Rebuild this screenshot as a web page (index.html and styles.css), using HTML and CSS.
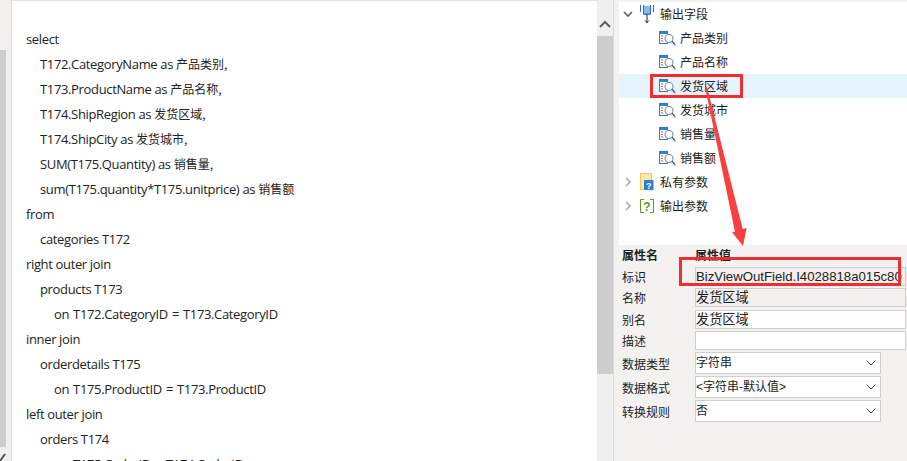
FILE: index.html
```html
<!DOCTYPE html>
<html lang="zh">
<head>
<meta charset="utf-8">
<title>SQL</title>
<link rel="stylesheet" href="styles.css">
</head>
<body>
<svg width="0" height="0" class="defs">
  <symbol id="field" viewBox="0 0 17 15">
    <rect x="0.5" y="0.5" width="8" height="12" fill="#fff" stroke="#1f7fc4"/>
    <rect x="0.5" y="0.5" width="8" height="2.5" fill="#1f8ad0"/>
    <path d="M2 5h2M2 7.5h2M2 10h2" stroke="#c0503c"/>
    <circle cx="10" cy="7.5" r="4" fill="#fff" stroke="#7c8ea6" stroke-width="1.1"/>
    <path d="M12.800 10.300l3.400 3.400" stroke="#4e6580" stroke-width="1.600"/>
  </symbol>
</svg>
<div class="app">
  <div class="edge"><div class="edge-thumb"></div></div>
  <main class="editor">
    <div class="code">
      <div>select</div>
      <div class="i1">T172.CategoryName as <span class="cjk">产品类别,</span></div>
      <div class="i1">T173.ProductName as <span class="cjk">产品名称,</span></div>
      <div class="i1">T174.ShipRegion as <span class="cjk">发货区域,</span></div>
      <div class="i1">T174.ShipCity as <span class="cjk">发货城市,</span></div>
      <div class="i1">SUM(T175.Quantity) as <span class="cjk">销售量,</span></div>
      <div class="i1">sum(T175.quantity*T175.unitprice) as <span class="cjk">销售额</span></div>
      <div>from</div>
      <div class="i1">categories T172</div>
      <div>right outer join</div>
      <div class="i1">products T173</div>
      <div class="i2">on T172.CategoryID = T173.CategoryID</div>
      <div>inner join</div>
      <div class="i1">orderdetails T175</div>
      <div class="i2">on T175.ProductID = T173.ProductID</div>
      <div>left outer join</div>
      <div class="i1">orders T174</div>
      <div class="i2">on T175.OrderID = T174.OrderID</div>
    </div>
  </main>
  <div class="vscroll">
    <svg class="up" width="12" height="8" viewBox="0 0 12 8"><path d="M1 7l5-5 5 5" fill="none" stroke="#606060" stroke-width="2"/></svg>
    <div class="vthumb"></div>
  </div>
  <aside class="side">
    <div class="tree">
      <div class="row root">
        <svg class="tw" width="10" height="10" viewBox="0 0 10 10"><path d="M1 3l4 4 4-4" fill="none" stroke="#606060" stroke-width="1.6"/></svg>
        <svg class="ico" width="14" height="18" viewBox="0 0 14 18"><rect x="3" y="1" width="8" height="9" fill="#8db8ee"/><path d="M.5 0v7M3.500 0v9h7V0M13.500 0v7" fill="none" stroke="#2a6fc4"/><path d="M7 9v9M5 15.500l2 2 2-2" fill="none" stroke="#222"/></svg>
        <span>输出字段</span>
      </div>
      <div class="row leaf"><svg class="f"><use href="#field"/></svg><span>产品类别</span></div>
      <div class="row leaf"><svg class="f"><use href="#field"/></svg><span>产品名称</span></div>
      <div class="row leaf sel"><svg class="f"><use href="#field"/></svg><span>发货区域</span></div>
      <div class="row leaf"><svg class="f"><use href="#field"/></svg><span>发货城市</span></div>
      <div class="row leaf"><svg class="f"><use href="#field"/></svg><span>销售量</span></div>
      <div class="row leaf"><svg class="f"><use href="#field"/></svg><span>销售额</span></div>
      <div class="row root">
        <svg class="tw" width="10" height="10" viewBox="0 0 10 10"><path d="M3 1l4 4-4 4" fill="none" stroke="#a8a8a8" stroke-width="1.6"/></svg>
        <svg class="ico" width="14" height="18" viewBox="0 0 14 18"><rect x=".5" y=".5" width="11" height="16" fill="#fbe7a8" stroke="#e8c868"/><rect x="4" y="7" width="9.500" height="10" fill="#2f7fd6"/><text x="8.700" y="15.500" class="q">?</text></svg>
        <span>私有参数</span>
      </div>
      <div class="row root">
        <svg class="tw" width="10" height="10" viewBox="0 0 10 10"><path d="M3 1l4 4-4 4" fill="none" stroke="#a8a8a8" stroke-width="1.6"/></svg>
        <svg class="ico" width="14" height="15" viewBox="0 0 14 15"><path d="M4 .5H.5v13H4M10 .5h3.500v13H10" fill="none" stroke="#5a9a1e"/><text x="7" y="12" class="q2">?</text></svg>
        <span>输出参数</span>
      </div>
    </div>
    <div class="props">
      <div class="phead"><span>属性名</span><span>属性值</span></div>
      <div class="prop"><label>标识</label><div class="val ro">BizViewOutField.I4028818a015c80</div></div>
      <div class="prop"><label>名称</label><div class="val ro">发货区域</div></div>
      <div class="prop"><label>别名</label><div class="val">发货区域</div></div>
      <div class="prop"><label>描述</label><div class="val"></div></div>
      <div class="prop sel-row"><label>数据类型</label><div class="val combo">字符串<svg width="10" height="6" viewBox="0 0 10 6"><path d="M.5.500l4.500 4.500 4.500-4.500" fill="none" stroke="#444"/></svg></div></div>
      <div class="prop sel-row"><label>数据格式</label><div class="val combo">&lt;字符串-默认值&gt;<svg width="10" height="6" viewBox="0 0 10 6"><path d="M.5.500l4.500 4.500 4.500-4.500" fill="none" stroke="#444"/></svg></div></div>
      <div class="prop sel-row"><label>转换规则</label><div class="val combo">否<svg width="10" height="6" viewBox="0 0 10 6"><path d="M.5.500l4.500 4.500 4.500-4.500" fill="none" stroke="#444"/></svg></div></div>
    </div>
  </aside>
  <div class="mark mark-tree"></div>
  <div class="mark mark-id"></div>
  <svg class="arrow" width="60" height="170" viewBox="0 0 60 170"><path d="M5 2L7 2 42.700 144 46.700 143 43 161 31.700 146.700 35 147Z" fill="#f84040"/></svg>
  <svg class="grip" width="6" height="8" viewBox="0 0 6 8"><path d="M0 8L5 1" stroke="#555" stroke-width="2"/></svg>
</div>
</body>
</html>
```
FILE: styles.css
```css
html, body { margin: 0; padding: 0; }
body { width: 907px; height: 461px; overflow: hidden; background: #f3f2f1; font-family: "Liberation Sans", "Noto Sans CJK SC", sans-serif; }
.defs { position: absolute; }
.app { position: relative; display: flex; width: 907px; height: 461px; overflow: hidden; }
.edge { width: 11px; flex: none; padding-top: 50px; box-sizing: border-box; background: #f1f0ef; }
.edge-thumb { width: 6px; height: 397px; background: #cdcdcd; }
.editor { width: 586px; flex: none; background: #fff; border-top: 1px solid #e2e2e0; border-left: 1px solid #dcdcdc; box-sizing: border-box; overflow: hidden; }
.code { padding: 26px 0 0 14px; font-size: 13px; line-height: 25px; color: #222; white-space: nowrap; font-family: "Open Sans", "Noto Sans CJK SC", sans-serif; letter-spacing: -0.35px; }
.code div { height: 25px; }
.cjk { font-size: 12px; line-height: 1; letter-spacing: 0; font-family: "Noto Sans CJK SC", sans-serif; }
.i1 { padding-left: 14px; }
.i2 { padding-left: 28px; word-spacing: 1px; }
.vscroll { width: 17px; flex: none; padding-top: 20px; box-sizing: border-box; display: flex; flex-direction: column; align-items: center; background: #efefef; border-right: 1px solid #dcdbd9; margin-right: 5px; }
.up { flex: none; }
.vthumb { width: 16px; height: 338px; margin-top: 8px; background: #cdcdcd; }
.side { flex: 1; min-width: 0; display: flex; flex-direction: column; }
.tree { height: 243px; margin-top: 2px; background: #fff; flex: none; }
.row { height: 24px; display: flex; align-items: center; font-size: 12px; color: #222; white-space: nowrap; }
.row span { padding-bottom: 1px; }
.root { padding-left: 4px; }
.tw { width: 10px; margin-right: 7px; flex: none; }
.ico { margin-right: 6px; flex: none; }
.leaf { padding-left: 40px; }
.f { width: 17px; height: 15px; margin-right: 4px; flex: none; }
.sel { background: #e5f3fd; }
.q { font: bold 9px "Liberation Sans", sans-serif; fill: #fff; text-anchor: middle; }
.q2 { font: bold 12px "Liberation Sans", sans-serif; fill: #5a9a1e; text-anchor: middle; }
.props { padding: 2px 0 0 3px; font-size: 12px; color: #222; }
.phead { display: flex; font-weight: bold; height: 19px; line-height: 19px; }
.phead span:first-child { width: 73px; }
.prop { display: flex; align-items: center; height: 21.330px; }
.prop label { width: 73px; flex: none; }
.val { box-sizing: border-box; width: 211px; height: 19px; border: 1px solid #d0cfcc; background: #fff; font-size: 13.200px; line-height: 17px; white-space: nowrap; overflow: hidden; }
.ro { background: #f1f0ef; }
.sel-row { height: 24px; }
.combo { width: 186px; height: 22px; line-height: 20px; font-size: 12px; display: flex; align-items: center; justify-content: space-between; padding-right: 4px; }
.mark { position: absolute; box-sizing: border-box; border: 3px solid #ef2f2f; }
.mark-tree { left: 650px; top: 74px; width: 93px; height: 24px; }
.mark-id { left: 679px; top: 257px; width: 222px; height: 29px; }
.arrow { position: absolute; left: 700px; top: 85px; }
.grip { position: absolute; left: 0; top: 453px; }
```
